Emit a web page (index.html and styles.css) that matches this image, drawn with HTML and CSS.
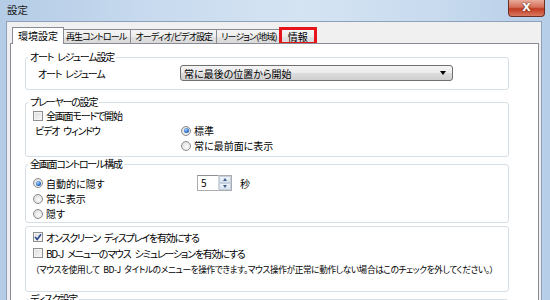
FILE: index.html
```html
<!DOCTYPE html>
<html lang="ja">
<head>
  <meta charset="UTF-8" />
  <meta name="viewport" content="width=device-width, initial-scale=1.0" />
  <title>設定</title>
  <link rel="stylesheet" href="styles.css">
</head>
<body>
  <div class="window">
    <div class="titlebar">
      <span class="title">設定</span>
      <div class="close">X</div>
    </div>

    <div class="client">
      <!-- tab strip -->
      <div class="tabs">
        <div class="tab active">環境設定</div>
        <div class="tab">再生コントロール</div>
        <div class="tab">オーディオ/ビデオ設定</div>
        <div class="tab">リージョン(地域)</div>
        <div class="tab marked">情報</div>
      </div>

      <div class="pane">
        <fieldset class="group g-resume">
          <legend class="kana">オート レジューム設定</legend>
          <div class="row row-16">
            <span class="label-col indent kana">オート レジューム</span>
            <div class="select">
              <span>常に最後の位置から開始</span>
              <span class="arrow"></span>
            </div>
          </div>
        </fieldset>

        <fieldset class="group g-player">
          <legend class="kana">プレーヤーの設定</legend>
          <div class="row">
            <label class="opt"><span class="box"></span><span class="kana">全画面モードで開始</span></label>
          </div>
          <div class="field">
            <span class="label-col pad2 kana">ビデオ ウィンドウ</span>
            <div class="options">
              <label class="opt row"><span class="radio on"></span>標準</label>
              <label class="opt row"><span class="radio"></span>常に最前面に表示</label>
            </div>
          </div>
        </fieldset>

        <fieldset class="group g-fullscreen">
          <legend class="kana">全画面コントロール構成</legend>
          <div class="row row-16">
            <label class="opt wide"><span class="radio on"></span>自動的に隠す</label>
            <div class="spinner">
              <span class="spin-value">5</span>
              <div class="spin-buttons">
                <span class="spin-btn"><span class="tri up"></span></span>
                <span class="spin-btn"><span class="tri down"></span></span>
              </div>
            </div>
            <span class="unit">秒</span>
          </div>
          <div class="row">
            <label class="opt"><span class="radio"></span>常に表示</label>
          </div>
          <div class="row">
            <label class="opt"><span class="radio"></span>隠す</label>
          </div>
        </fieldset>

        <fieldset class="group g-extra">
          <div class="row row-16">
            <label class="opt">
              <span class="box">
                <svg width="8" height="8" viewBox="0 0 8 8"><path d="M1 4 L3.2 6.4 L7 1.2" fill="none" stroke="#2a4a8f" stroke-width="1.6"/></svg>
              </span><span class="kana">オンスクリーン ディスプレイを有効にする</span>
            </label>
          </div>
          <div class="row row-16">
            <label class="opt"><span class="box"></span><span class="kana">BD-J メニューのマウス シミュレーションを有効にする</span></label>
          </div>
          <div class="row row-16 note">（マウスを使用して BD-J タイトルのメニューを操作できます。マウス操作が正常に動作しない場合はこのチェックを外してください。）</div>
        </fieldset>

        <fieldset class="group g-disc">
          <legend class="kana">ディスク設定</legend>
        </fieldset>
      </div>
    </div>
  </div>
</body>
</html>
```

FILE: styles.css
```css
* {
  box-sizing: border-box;
}
body {
  margin: 0;
  font-family: "Noto Sans CJK JP", sans-serif;
  font-size: 10px;
  font-feature-settings: "palt";
  color: #000;
  overflow: hidden;
}
/* katakana runs are much narrower in the original UI font */
.kana {
  letter-spacing: -1.2px;
  word-spacing: 3px;
}
.window {
  width: 550px;
  height: 300px;
  padding: 0 8px 0 6px;
  display: flex;
  flex-direction: column;
  overflow: hidden;
  background: linear-gradient(90deg, #b4cce6 0%, #c9dbef 30%, #d5e4f3 55%, #c7daee 80%, #b7cee8 100%);
}
.titlebar {
  height: 21px;
  flex-shrink: 0;
  display: flex;
  justify-content: space-between;
  align-items: flex-start;
}
.title {
  margin: 4px 0 0 1px;
  font-size: 10.5px;
  line-height: 12px;
  color: #1a1a1a;
}
.close {
  width: 37px;
  height: 17px;
  margin-right: -3px;
  border: 1px solid #6b2f25;
  border-top: none;
  border-radius: 0 0 4px 4px;
  background: linear-gradient(#e9aa9b, #d56e58 45%, #c13b21 55%, #d8785f);
  color: #fff;
  font: bold 11px/15px "DejaVu Sans", sans-serif;
  text-align: center;
  text-shadow: 0 0 2px #3a1a14;
}
.client {
  flex: 1;
  min-height: 0;
  display: flex;
  flex-direction: column;
  background: #f0f0f0;
  border: 1px solid #8da2b8;
  border-bottom: none;
  padding: 5px 2px 0 3px;
}

/* tabs */
.tabs {
  display: flex;
  align-items: flex-end;
  padding-left: 5px;
  flex-shrink: 0;
}
.tab {
  height: 14px;
  padding: 0 4px;
  margin-left: -1px;
  border: 1px solid #898c95;
  border-bottom: none;
  background: linear-gradient(#f5f5f5, #ededed 50%, #e2e2e2 51%, #d9d9d9);
  font-size: 9px;
  line-height: 13px;
  letter-spacing: -0.9px;
  white-space: nowrap;
}
.tab.active {
  height: 17px;
  margin: 0 -2px -1px -3px;
  padding: 0 5px;
  background: #fff;
  font-size: 10px;
  line-height: 15px;
  letter-spacing: 0;
  position: relative;
  z-index: 1;
}
.tab.marked {
  padding: 0 6px;
  font-size: 10px;
  letter-spacing: 0;
  outline: 3px solid #e8141b;
  outline-offset: -1px;
}
.pane {
  flex: 1;
  min-height: 0;
  overflow: hidden;
  background: #fff;
  border: 1px solid #898c95;
  border-bottom: none;
  padding: 7px 29px 0 14px;
}

/* group boxes */
.group {
  margin: 0;
  min-width: 0;
  padding: 0 7px;
  border: 1px solid #d5dfe5;
  border-radius: 3px;
}
.group legend {
  padding: 0 2px;
  margin-left: -5px;
  line-height: 12px;
}
.g-resume {
  padding-top: 2px;
  padding-bottom: 8px;
}
.g-player {
  margin-top: 6px;
  padding-bottom: 3px;
}
.g-fullscreen {
  margin-top: 1px;
  padding-top: 5px;
  padding-bottom: 1px;
}
.g-extra {
  margin-top: 3px;
  padding-top: 2px;
  padding-bottom: 14px;
}
.g-disc {
  margin-top: 1px;
  height: 40px;
}

.row {
  display: flex;
  align-items: center;
  height: 15px;
}
.row-16 {
  height: 16px;
}
.field {
  display: flex;
}
.label-col {
  width: 147px;
  flex-shrink: 0;
  line-height: 15px;
}
.indent {
  padding-left: 5px;
}
.pad2 {
  padding-left: 2px;
}
.options {
  margin-left: 1px;
}
.opt {
  display: flex;
  align-items: center;
  gap: 3px;
  white-space: nowrap;
}
.wide {
  width: 164px;
}
.note {
  padding-left: 2px;
  font-size: 8.7px;
  letter-spacing: -0.4px;
  word-spacing: 2px;
  white-space: nowrap;
}

/* checkbox and radio */
.box {
  width: 10px;
  height: 10px;
  flex-shrink: 0;
  border: 1px solid #8e8f8f;
  background: linear-gradient(135deg, #dcdcdc, #f7f7f7);
  box-shadow: inset 0 0 0 1px #f4f4f4;
  display: flex;
  align-items: center;
  justify-content: center;
}
.radio {
  width: 10px;
  height: 10px;
  flex-shrink: 0;
  border: 1px solid #8b8b8b;
  border-radius: 50%;
  background: radial-gradient(circle at 60% 60%, #fafafa, #d6d6d6);
  display: flex;
  align-items: center;
  justify-content: center;
}
.radio.on::after {
  content: "";
  width: 5px;
  height: 5px;
  border-radius: 50%;
  background: radial-gradient(circle at 40% 35%, #a9d6ff, #2869c4 60%, #163e80);
}

/* dropdown */
.select {
  width: 273px;
  height: 16px;
  display: flex;
  align-items: center;
  justify-content: space-between;
  padding: 0 6px 0 3px;
  border: 1px solid #707070;
  border-radius: 3px;
  background: linear-gradient(#f4f4f4, #ebebeb 50%, #dddddd 51%, #cfcfcf);
}
.arrow {
  width: 0;
  height: 0;
  border-left: 3px solid transparent;
  border-right: 3px solid transparent;
  border-top: 4px solid #000;
}

/* numeric spinner */
.spinner {
  display: flex;
  height: 16px;
}
.spin-value {
  width: 21px;
  border: 1px solid #abadb3;
  border-right: none;
  border-top-color: #8e9096;
  padding-left: 3px;
  line-height: 14px;
}
.spin-buttons {
  width: 14px;
  display: flex;
  flex-direction: column;
  border: 1px solid #abadb3;
  border-left-color: #d6d6d6;
}
.spin-btn {
  flex: 1;
  display: flex;
  align-items: center;
  justify-content: center;
  background: linear-gradient(#f0f4f9, #d9e3ee);
  border: 1px solid #c3cfdc;
}
.tri {
  width: 0;
  height: 0;
  border-left: 2.5px solid transparent;
  border-right: 2.5px solid transparent;
}
.tri.up {
  border-bottom: 3px solid #3d5f8e;
}
.tri.down {
  border-top: 3px solid #3d5f8e;
}
.unit {
  margin-left: 8px;
}
```
